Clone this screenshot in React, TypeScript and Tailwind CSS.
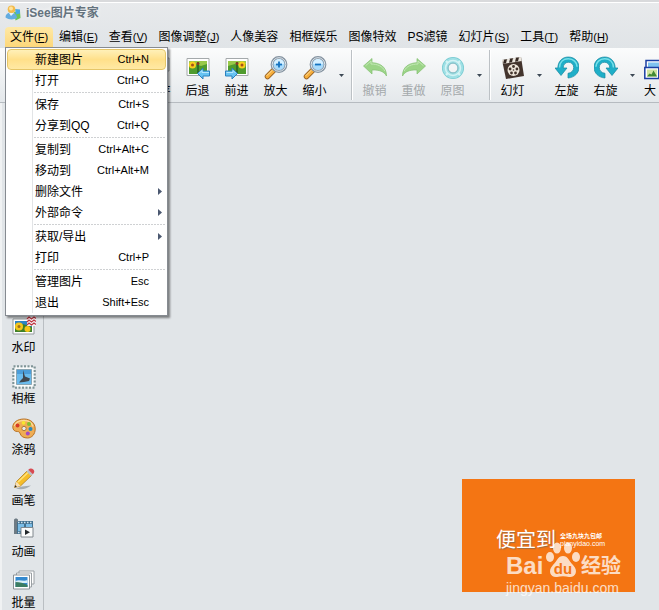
import type { ReactNode } from "react";
import clsx from "clsx";

type MenuEntry = { label: string; keys?: string; submenu?: boolean; active?: boolean };

const menus = [
  { label: "文件", hotkey: "F", open: true },
  { label: "编辑", hotkey: "E" },
  { label: "查看", hotkey: "V" },
  { label: "图像调整", hotkey: "J" },
  { label: "人像美容" },
  { label: "相框娱乐" },
  { label: "图像特效" },
  { label: "PS滤镜" },
  { label: "幻灯片", hotkey: "S" },
  { label: "工具", hotkey: "T" },
  { label: "帮助", hotkey: "H" },
];

const fileMenu: MenuEntry[][] = [
  [
    { label: "新建图片", keys: "Ctrl+N", active: true },
    { label: "打开", keys: "Ctrl+O" },
  ],
  [
    { label: "保存", keys: "Ctrl+S" },
    { label: "分享到QQ", keys: "Ctrl+Q" },
  ],
  [
    { label: "复制到", keys: "Ctrl+Alt+C" },
    { label: "移动到", keys: "Ctrl+Alt+M" },
    { label: "删除文件", submenu: true },
    { label: "外部命令", submenu: true },
  ],
  [
    { label: "获取/导出", submenu: true },
    { label: "打印", keys: "Ctrl+P" },
  ],
  [
    { label: "管理图片", keys: "Esc" },
    { label: "退出", keys: "Shift+Esc" },
  ],
];

function Svg({ children, className }: { children: ReactNode; className?: string }) {
  return (
    <svg viewBox="0 0 24 24" className={clsx("size-6 shrink-0", className)} fill="none" aria-hidden="true">
      {children}
    </svg>
  );
}

function Logo() {
  return (
    <svg viewBox="0 0 16 16" className="size-4" aria-hidden="true">
      <path d="M9 7l6-1 .5 7-5 2.500z" fill="#6cc455" />
      <path d="M10 4l5 .5v4l-4 1z" fill="#48a9e6" />
      <path d="M.500 12.500C.500 9 3 7.500 6 7.500s6 2 6 5.500c-3 2-8.500 2-11.500-.5z" fill="#63ace0" />
      <path d="M4 8l2 3 3-3z" fill="#e8f4fc" />
      <circle cx="6.500" cy="4.200" r="3.800" fill="#f3bb4b" />
      <circle cx="6" cy="3.600" r="2" fill="#ffe39c" />
    </svg>
  );
}

function Photo() {
  return (
    <>
      <path d="M1 2.500h22v17H1z" fill="#fff" stroke="#a4a9ab" strokeWidth="1" />
      <path d="M3 5h18v13H3z" fill="#4f9b2e" />
      <path d="M3 5h18v3l-6 2-5-2-7 2z" fill="#99c94a" />
      <path d="M11 6h2v11h-2z" fill="#2f6e28" />
      <circle cx="12" cy="7.500" r="1.500" fill="#8b3a24" />
    </>
  );
}

function BackIcon() {
  return (
    <Svg>
      <Photo />
      <circle cx="6.500" cy="9" r="3.500" fill="#f9cf1d" />
      <circle cx="6.500" cy="9" r="1.500" fill="#a5521b" />
      <path d="M11.500 17.500L17 12v3h6.500v5H17v3z" fill="#67c3f2" stroke="#2b80bd" />
      <path d="M13.500 17l2.500-2.500V16.500h7" stroke="#b9e8fd" />
    </Svg>
  );
}

function ForwardIcon() {
  return (
    <Svg>
      <Photo />
      <circle cx="17" cy="9" r="3.500" fill="#f9cf1d" />
      <circle cx="17" cy="9" r="1.500" fill="#a5521b" />
      <path d="M12.500 17.500L7 12v3H.500v5H7v3z" fill="#67c3f2" stroke="#2b80bd" />
      <path d="M1.500 16.500h6.500v-2l2.500 2.500" stroke="#b9e8fd" />
    </Svg>
  );
}

function MagnifierIcon({ plus }: { plus?: boolean }) {
  return (
    <Svg>
      <path d="M9.500 14.500L3.500 20.500" stroke="#9a6426" strokeWidth="5.500" strokeLinecap="round" />
      <path d="M9.500 14.500L3.500 20.500" stroke="#f7ae3c" strokeWidth="3.800" strokeLinecap="round" />
      <path d="M8 14.500l-5 5" stroke="#ffe2a0" strokeLinecap="round" />
      <circle cx="15" cy="8.500" r="7" fill="#a9dbfb" stroke="#8593a0" strokeWidth="2.800" />
      <circle cx="15" cy="8.500" r="6.800" stroke="#dfe7ed" strokeWidth="1" />
      <path d="M10 8a5 5 0 0110 0z" fill="#d6f0ff" />
      <path d="M12 8.500h6" stroke="#1473c0" strokeWidth="1.800" />
      {plus && <path d="M15 5.500v6" stroke="#1473c0" strokeWidth="1.800" />}
    </Svg>
  );
}

function CurveArrow({ flip }: { flip?: boolean }) {
  return (
    <Svg>
      <g transform={flip ? "matrix(-1 0 0 1 24 0)" : undefined}>
        <path
          d="M.5 10L9 2.500v4.200c8 .3 14.500 4 14.500 13.300-2.500-4.500-7-6.200-14.500-6v4z"
          fill="#9bd487"
          stroke="#82c070"
          strokeWidth=".7"
        />
        <path d="M2.500 9.800L8 5v3c6 0 11.500 2 13.800 7" stroke="#c3e8b5" />
      </g>
    </Svg>
  );
}

function RingIcon() {
  return (
    <Svg>
      <circle cx="12" cy="12" r="7.800" stroke="#78cbd2" strokeWidth="6.500" />
      <circle cx="12" cy="12" r="7.800" stroke="#9fe0e5" strokeWidth="5" />
      <circle cx="12" cy="12" r="7.500" stroke="#d5f3f5" strokeWidth="1.500" />
      <circle cx="12" cy="12" r="5" stroke="#8bbcc5" />
      <path d="M5 5l2 2M19 5l-2 2M5 19l2-2M19 19l-2-2" stroke="#d5f4f5" strokeWidth="2" />
    </Svg>
  );
}

function FilmIcon() {
  return (
    <Svg>
      <path d="M1 4l19-3 3 19-18 3z" fill="#43342d" />
      <path d="M1 4l19-3 .6 4L1.600 8z" fill="#ece7df" />
      <path d="M3 3.700l3-.4-1 3.900-3 .5zM9 2.800l3-.5-1 4-3 .4zM15 1.800l3-.4-1 3.900-3 .5z" fill="#352923" />
      <circle cx="12.500" cy="14" r="6" fill="#eee6da" />
      <g fill="#43342d">
        <circle cx="12.500" cy="10.500" r="1.400" />
        <circle cx="15.900" cy="13" r="1.400" />
        <circle cx="14.500" cy="17" r="1.400" />
        <circle cx="10.500" cy="17" r="1.400" />
        <circle cx="9.100" cy="13" r="1.400" />
        <circle cx="12.500" cy="14" r=".8" />
      </g>
    </Svg>
  );
}

function RotateIcon({ right }: { right?: boolean }) {
  return (
    <Svg>
      <g transform={right ? "matrix(-1 0 0 1 24 0)" : undefined}>
        <path
          d="M0 12h2.800C3 5 7.500 1 13.300 1 19.500 1 24 5.500 24 11.300c0 5.700-4.500 10.200-11 10.700v-4.700c3.500-.3 5.700-2.800 5.700-5.800 0-3.200-2.200-5.200-5.300-5.200-3 0-5.200 2.200-5.200 5.700H12L6 19.500z"
          fill="#1fafc8"
          stroke="#15869f"
          strokeWidth=".7"
        />
        <path d="M4.500 11.500C4.800 6 8.500 2.800 13.300 2.800c5 0 8.800 3.600 8.800 8" stroke="#78e0e9" strokeWidth="1.500" />
      </g>
    </Svg>
  );
}

function SizeIcon() {
  return (
    <Svg>
      <path d="M2 4.500h21v16H2z" fill="#fff" stroke="#1b3fa3" strokeWidth="1.500" />
      <path d="M4 6.500h17v5H4z" fill="#7fc2f0" />
      <path d="M.800 11.500h14v11H.800z" fill="#fff" stroke="#1b3fa3" strokeWidth="1.500" />
      <path d="M3 13.500h10v7H3z" fill="#cfe4a0" />
      <path d="M3 20.500l2.500-3 2 1 2-4 3.500 6z" fill="#438a35" />
    </Svg>
  );
}

function WatermarkIcon() {
  return (
    <Svg>
      <path d="M1 5h21v15H1z" fill="#fff" stroke="#93999c" />
      <path d="M3 7h17v11H3z" fill="#2d83c5" />
      <path d="M3 12l8-2 9 3v5H3z" fill="#3f8128" />
      <circle cx="7" cy="12.500" r="4" fill="#f5c51b" />
      <circle cx="7" cy="12.500" r="1.500" fill="#a0701b" />
      <circle cx="15.500" cy="15" r="3" fill="#f5c51b" />
      <path d="M15 2h9v10h-9z" fill="#f4f2f3" />
      <path
        d="M15 5l2-2 2.500 2L22 3l2 1.500M15 8l2-2 2.500 2L22 6l2 1.500M15 11l2-2 2.500 2L22 9l2 1.500"
        stroke="#bf3440"
        strokeWidth="1.200"
      />
    </Svg>
  );
}

function StampIcon() {
  return (
    <Svg>
      <path d="M1.500 1.500h21v21h-21z" fill="#f4f6f6" stroke="#7f9496" strokeWidth="2.500" strokeDasharray="2 1.500" />
      <path d="M2.500 2.500h19v19h-19z" fill="#fafcfc" />
      <path d="M4.500 4.500h15v15h-15z" fill="#6abbed" stroke="#89a5b2" />
      <path d="M5 5h14v4H5z" fill="#4b9dd9" />
      <path d="M11 5l2 6.500 5 2-1 2.500-5 1-5 .5 2-2.500 2-2z" fill="#41474e" />
    </Svg>
  );
}

function PaletteIcon() {
  return (
    <Svg>
      <path
        d="M12 3C5.500 3 .800 6.500.800 11c0 3 2 4.500 4.500 4.500 2 0 2.500 1 3 2.500C9 20.500 12 22 15.500 22c4.500 0 7.700-4 7.700-9C23.200 7 18.500 3 12 3z"
        fill="#efad54"
        stroke="#b97325"
      />
      <path d="M2.500 10C3.500 6.500 7.500 4.500 12 4.500s8 2.500 9 6" stroke="#fbd998" strokeWidth="1.500" />
      <circle cx="12" cy="12.500" r="2.200" fill="#e5eaee" stroke="#ad7937" />
      <circle cx="5.500" cy="9.500" r="2" fill="#d63a25" />
      <circle cx="11.500" cy="6.800" r="1.900" fill="#f5e62f" />
      <circle cx="17" cy="8" r="2" fill="#81bd2d" />
      <circle cx="18.500" cy="13" r="2" fill="#2989bd" />
      <circle cx="15.800" cy="17.500" r="2" fill="#a24ac2" />
    </Svg>
  );
}

function PencilIcon() {
  return (
    <Svg>
      <path d="M4 21.500c5 1.500 11 .5 15-3l-9 1z" fill="#a5acb0" />
      <path d="M2.500 20.500l2-6L15 4l4.500 4.500L8.500 19z" fill="#f5bd29" stroke="#a77417" strokeWidth=".7" />
      <path d="M6 15L16 5.500" stroke="#ffe27a" strokeWidth="1.500" />
      <path d="M2.500 20.500l2-6 4 4.500z" fill="#f7dfb5" />
      <path d="M2.500 20.500l.8-2.500 1.600 1.700z" fill="#27292b" />
      <path d="M14.500 4.500l1.800-1.700 4.500 4.500L19 9z" fill="#bac0c6" />
      <path d="M16.300 2.800C18 1 20 1.300 21.300 2.500s1.500 3 -.5 4.800z" fill="#d84a51" />
    </Svg>
  );
}

function MovieIcon() {
  return (
    <Svg>
      <path d="M3 3h18v13H3z" fill="#43718f" />
      <path d="M6 6h6v7H6zM14 6h6v4h-6z" fill="#79bce6" />
      <path d="M3 4.500h18M3 14.500h7" stroke="#cfe2ed" strokeWidth="1.500" strokeDasharray="1.500 1.500" />
      <path d="M2 2c0-2 4-2 4 0v2H5v12H2z" fill="#6e7b84" />
      <path d="M9 9.500h12v9.500H9z" fill="#fafbfb" stroke="#81888d" />
      <path d="M13 11.500l5 2.800-5 2.700z" fill="#22272b" />
    </Svg>
  );
}

function BatchIcon() {
  return (
    <Svg>
      <path d="M7 2h15v13H7z" fill="#fff" stroke="#9aa0a4" />
      <path d="M4.500 4h15v14h-15z" fill="#fff" stroke="#9aa0a4" />
      <path d="M1.500 6h16v14h-16z" fill="#fff" stroke="#8b9296" />
      <path d="M3.500 8h12v10h-12z" fill="#3389cf" />
      <path d="M3.500 12c4-2 8 1 12-1v3h-12z" fill="#d8eef7" />
      <path d="M3.500 13c4 0 8 1 12 3v2h-12z" fill="#3b7d62" />
    </Svg>
  );
}

type ToolButtonProps = { label: string; icon: ReactNode; disabled?: boolean; alignLeft?: boolean };

function ToolButton({ label, icon, disabled, alignLeft }: ToolButtonProps) {
  return (
    <button
      type="button"
      disabled={disabled}
      className={clsx(
        "flex w-[39px] shrink-0 flex-col gap-[3px] whitespace-nowrap pt-2 leading-4 disabled:text-[#a4a9ab]",
        alignLeft ? "items-start pl-1" : "items-center",
      )}
    >
      {icon}
      {label}
    </button>
  );
}

function DropArrow({ label }: { label: string }) {
  return (
    <button type="button" aria-label={label} className="flex w-[15px] shrink-0 items-center justify-center">
      <svg viewBox="0 0 5 3" className="h-[3px] w-[5px]" aria-hidden="true">
        <path d="M0 0h5L2.500 3z" fill="#3d4855" />
      </svg>
    </button>
  );
}

function ToolDivider() {
  return <div className="mx-0.5 my-0.5 w-0.5 shrink-0 border-l border-r border-l-[#bcc1c5] border-r-white" />;
}

function FileMenu() {
  return (
    <div
      role="menu"
      className="absolute left-0 top-full z-10 w-[163px] border border-[#868b91] bg-white px-px pb-0.5 pt-px shadow-[2px_2px_2px_rgba(0,0,0,0.45)]"
    >
      <div className="bg-[linear-gradient(#e2e4e6,#e2e4e6)] bg-[length:1px_100%] bg-[position:25px_0] bg-no-repeat">
        {fileMenu.map((group, i) => (
          <div key={i}>
            {i > 0 && (
              <div className="ml-[27px] mr-px h-[3px] py-px">
                <div className="h-px bg-[repeating-linear-gradient(90deg,#cfd1d3_0_2px,#fff_2px_3px)]" />
              </div>
            )}
            {group.map((entry) => (
              <button
                key={entry.label}
                type="button"
                role="menuitem"
                className={clsx(
                  "flex h-[21px] w-full items-center justify-between whitespace-nowrap border pl-[27px]",
                  entry.submenu ? "pr-[3px]" : "pr-4",
                  entry.active
                    ? "rounded-sm border-[#e6c668] bg-linear-to-b from-[#fff0b8] via-[#ffe08a] to-[#ffe9a4]"
                    : "border-transparent",
                )}
              >
                <span>{entry.label}</span>
                {entry.keys && <span className="text-[11px]">{entry.keys}</span>}
                {entry.submenu && (
                  <svg viewBox="0 0 4 7" className="h-[7px] w-1" aria-hidden="true">
                    <path d="M0 0l4 3.500L0 7z" fill="#4b5870" />
                  </svg>
                )}
              </button>
            ))}
          </div>
        ))}
      </div>
    </div>
  );
}

function MenuBar() {
  return (
    <nav className="relative ml-[5px] flex gap-px text-black">
      {menus.map((m) => (
        <button
          key={m.label}
          type="button"
          className={clsx(
            "h-5 shrink-0 whitespace-nowrap px-[5px] leading-5",
            m.open && "rounded-t-sm bg-linear-to-b from-[#fee9a6] to-[#fdd779]",
          )}
        >
          {m.label}
          {m.hotkey && (
            <span className="text-[11px]">
              (<u className="underline-offset-1">{m.hotkey}</u>)
            </span>
          )}
        </button>
      ))}
      <FileMenu />
    </nav>
  );
}

function Toolbar() {
  return (
    <div className="flex h-[55px] shrink-0 overflow-hidden border-b border-[#b6bbc0] bg-linear-to-b from-[#fbfcfc] to-[#e4e8eb] pl-[139px]">
      <ToolButton label="保存" icon={<BatchIcon />} />
      <ToolButton label="后退" icon={<BackIcon />} />
      <ToolButton label="前进" icon={<ForwardIcon />} />
      <ToolButton label="放大" icon={<MagnifierIcon plus />} />
      <ToolButton label="缩小" icon={<MagnifierIcon />} />
      <DropArrow label="缩放" />
      <ToolDivider />
      <ToolButton label="撤销" icon={<CurveArrow />} disabled />
      <ToolButton label="重做" icon={<CurveArrow flip />} disabled />
      <ToolButton label="原图" icon={<RingIcon />} disabled />
      <DropArrow label="原图选项" />
      <ToolDivider />
      <ToolButton label="幻灯" icon={<FilmIcon />} />
      <DropArrow label="幻灯选项" />
      <ToolButton label="左旋" icon={<RotateIcon />} />
      <ToolButton label="右旋" icon={<RotateIcon right />} />
      <DropArrow label="旋转选项" />
      <ToolButton label="大" icon={<SizeIcon />} alignLeft />
    </div>
  );
}

const sideTools = [
  { label: "水印", icon: <WatermarkIcon /> },
  { label: "相框", icon: <StampIcon /> },
  { label: "涂鸦", icon: <PaletteIcon /> },
  { label: "画笔", icon: <PencilIcon /> },
  { label: "动画", icon: <MovieIcon /> },
  { label: "批量", icon: <BatchIcon /> },
];

function Sidebar() {
  return (
    <aside className="flex w-[42px] shrink-0 flex-col overflow-hidden border-r border-[#b9bec2] pl-0.5 pt-[209px]">
      {sideTools.map((tool) => (
        <button
          key={tool.label}
          type="button"
          className="flex h-[51px] shrink-0 flex-col items-center gap-0.5 pt-0.5 leading-4"
        >
          {tool.icon}
          {tool.label}
        </button>
      ))}
    </aside>
  );
}

function Banner() {
  return (
    <div className="relative h-[113px] w-[173px] bg-[#f47513] text-white">
      <div className="flex items-center gap-1 pl-[34px] pt-[49px]">
        <span className="whitespace-nowrap text-xl leading-6 [text-shadow:1px_1px_1px_#9b6b45]">便宜到</span>
        <span className="flex flex-col whitespace-nowrap text-[6px] font-bold leading-[7px]">
          全场九块九包邮
          <span className="text-[7px] font-normal">pianyidao.com</span>
        </span>
      </div>
      <div className="absolute left-11 top-[63px] opacity-75">
        <div className="flex items-end">
          <span className="w-[39px] text-2xl font-bold leading-6">Bai</span>
          <svg viewBox="0 0 36 36" className="size-9 shrink-0" aria-hidden="true">
            <g fill="#fff">
              <ellipse cx="5" cy="15" rx="4" ry="5" />
              <ellipse cx="12" cy="6" rx="4" ry="5.500" />
              <ellipse cx="23" cy="6" rx="4" ry="5.500" />
              <ellipse cx="31" cy="15" rx="4" ry="5" />
              <path d="M18 14c5 0 6 5 10 9 6 6 2 13-4 12-4-1-8-1-12 0-6 1-10-6-4-12 4-4 5-9 10-9z" />
            </g>
            <text x="18" y="32" textAnchor="middle" fontSize="15" fontWeight="bold" fill="#f47513">
              du
            </text>
          </svg>
          <span className="whitespace-nowrap text-xl font-bold leading-6">经验</span>
        </div>
        <div className="pt-0.5 text-sm leading-4">jingyan.baidu.com</div>
      </div>
    </div>
  );
}

export default function App() {
  return (
    <div className="flex h-screen flex-col overflow-hidden bg-[#e1e5e8] font-['Liberation_Sans','Noto_Sans_CJK_SC',sans-serif] text-xs text-black">
      <header className="flex shrink-0 flex-col border-t-2 border-[#d9dadc] bg-linear-to-b from-[#e8eaec] to-[#e0e4e7] pb-px">
        <div className="flex h-[25px] items-center gap-[5px] border-t border-white pb-1 pl-[5px]">
          <Logo />
          <h1 className="whitespace-nowrap font-bold text-[#65737e] [text-shadow:0_0_4px_#fff]">iSee图片专家</h1>
        </div>
        <MenuBar />
      </header>
      <Toolbar />
      <div className="flex min-h-0 flex-1">
        <div className="w-0.5 bg-[#f0f2f3]" />
        <Sidebar />
        <main className="flex flex-1 items-end justify-end pb-[18px] pr-6">
          <Banner />
        </main>
      </div>
    </div>
  );
}
